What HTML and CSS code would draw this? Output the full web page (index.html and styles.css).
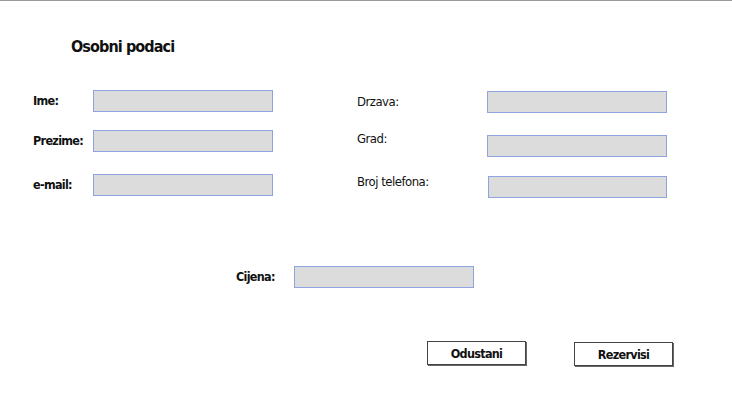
FILE: index.html
```html
<!DOCTYPE html>
<html lang="hr">
<head>
  <meta charset="UTF-8"/>
  <title>Osobni podaci</title>
  <link rel="stylesheet" href="styles.css">
</head>
<body>

<div class="page">
  <h1 class="title">Osobni podaci</h1>

  <div class="columns">
    <div class="col col-left">
      <div class="row row-ime">
        <label class="bold">Ime:</label>
        <div class="field"></div>
      </div>
      <div class="row row-prezime">
        <label class="bold">Prezime:</label>
        <div class="field"></div>
      </div>
      <div class="row row-email">
        <label class="bold">e-mail:</label>
        <div class="field"></div>
      </div>
    </div>

    <div class="col col-right">
      <div class="row row-drzava">
        <label>Drzava:</label>
        <div class="field"></div>
      </div>
      <div class="row row-grad">
        <label class="lift">Grad:</label>
        <div class="field"></div>
      </div>
      <div class="row row-broj">
        <label class="lift small">Broj telefona:</label>
        <div class="field shift"></div>
      </div>
    </div>
  </div>

  <div class="price">
    <label class="bold">Cijena:</label>
    <div class="field"></div>
  </div>

  <div class="actions">
    <button class="btn">Odustani</button>
    <button class="btn">Rezervisi</button>
  </div>
</div>

</body>
</html>
```

FILE: styles.css
```css
body {
  margin: 0;
  font-family: "DejaVu Sans", sans-serif;
  font-stretch: condensed;
  background: #fff;
  color: #111;
}
.page {
  border-top: 1px solid #9a9a9a;
  height: 415px;
}
.title {
  margin: 36px 0 0 71px;
  font-size: 16px;
  font-weight: bold;
  line-height: 20px;
  letter-spacing: -0.9px;
}
.columns {
  display: flex;
  margin-top: 33px;
}
.col {
  display: flex;
  flex-direction: column;
}
.col-left {
  padding-left: 33px;
  width: 324px;
}
.col-right {
  padding-top: 1px;
}
.row {
  display: grid;
  align-items: center;
}
.col-left .row {
  grid-template-columns: 60px 180px;
}
.col-right .row {
  grid-template-columns: 130px 180px;
}
.row-prezime { margin-top: 18px; }
.row-email { margin-top: 22px; }
.row-grad { margin-top: 22px; }
.row-broj { margin-top: 19px; }

label {
  font-size: 13px;
  line-height: 16px;
  letter-spacing: -0.5px;
}
.bold {
  font-size: 12.5px;
  font-weight: bold;
  letter-spacing: -0.7px;
}
.lift {
  align-self: start;
  margin-top: -4px;
}
.lift.small {
  margin-top: -2px;
}
.field {
  box-sizing: border-box;
  height: 22px;
  background: #dcdcdc;
  border: 1px solid #8fa3e0;
}
.shift {
  margin-left: 1px;
}

.price {
  display: flex;
  align-items: center;
  margin: 68px 0 0 236px;
}
.price label {
  width: 58px;
}
.price .field {
  width: 180px;
}

.actions {
  display: flex;
  gap: 48px;
  margin: 53px 0 0 427px;
}
.btn {
  box-sizing: border-box;
  width: 99px;
  height: 24px;
  padding: 0;
  background: #fff;
  border: 1px solid #444;
  box-shadow: 1px 1px 0 #666;
  font-family: inherit;
  font-stretch: condensed;
  font-size: 12.5px;
  font-weight: bold;
  letter-spacing: -0.7px;
  color: #111;
}
.btn + .btn {
  margin-top: 1px;
}
```
